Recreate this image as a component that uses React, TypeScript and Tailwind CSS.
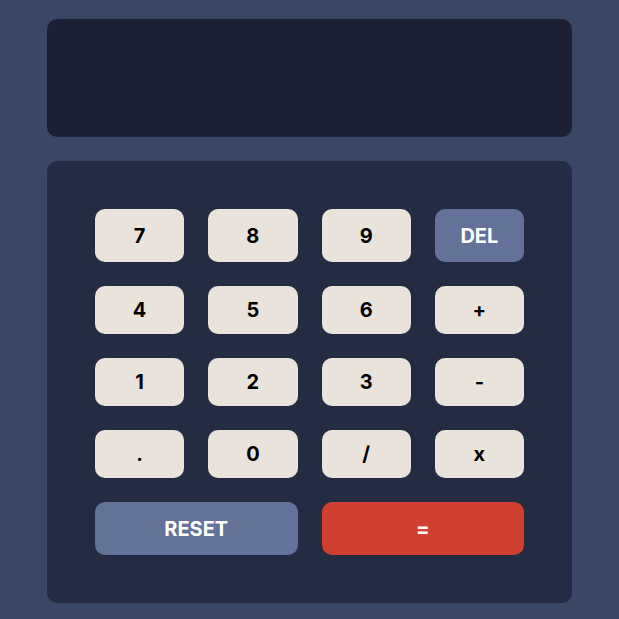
const KEYS: { label: string; kind?: 'dark' }[][] = [
  [{ label: '7' }, { label: '8' }, { label: '9' }, { label: 'DEL', kind: 'dark' }],
  [{ label: '4' }, { label: '5' }, { label: '6' }, { label: '+' }],
  [{ label: '1' }, { label: '2' }, { label: '3' }, { label: '-' }],
  [{ label: '.' }, { label: '0' }, { label: '/' }, { label: 'x' }],
]

export default function App() {
  return (
    <div
      className="min-h-screen bg-[#3a4764] pt-[19px] pb-4"
      style={{ fontFamily: 'Inter, "Liberation Sans", sans-serif' }}
    >
      <div className="w-[525px] mx-auto flex flex-col gap-6">
        <div className="h-[118px] rounded-[10px] bg-[#1b2034]" />

        <div className="rounded-[10px] bg-[#242c44] p-12 flex flex-col gap-6">
          {KEYS.map((row, r) => (
            <div key={r} className="grid grid-cols-4 gap-6">
              {row.map((k) => (
                <button
                  key={k.label}
                  className={`${r === 0 ? 'h-[53px]' : 'h-[48px]'} rounded-[10px] text-[20px] font-bold flex items-center justify-center ${
                    k.kind === 'dark'
                      ? 'bg-[#647198] text-white'
                      : 'bg-[#eae3dc] text-black'
                  }`}
                >
                  {k.label}
                </button>
              ))}
            </div>
          ))}
          <div className="grid grid-cols-2 gap-6">
            <button className="h-[53px] rounded-[10px] bg-[#647198] text-white text-[20px] font-bold">
              RESET
            </button>
            <button className="h-[53px] rounded-[10px] bg-[#d03f2f] text-white text-[20px] font-bold">
              =
            </button>
          </div>
        </div>
      </div>
    </div>
  )
}
